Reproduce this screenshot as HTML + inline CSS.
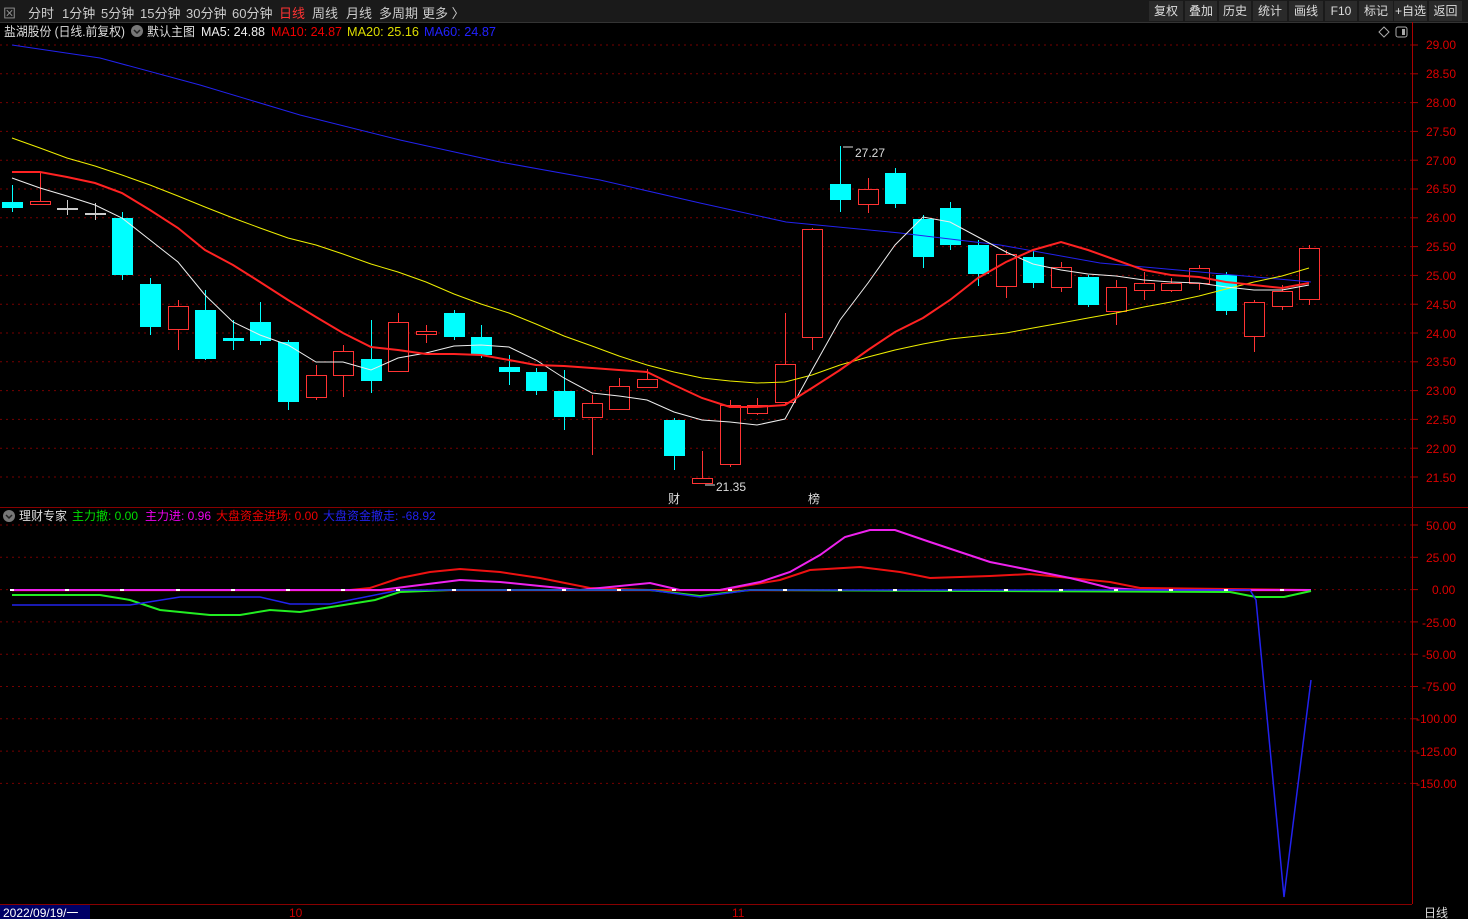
<!DOCTYPE html>
<html><head><meta charset="utf-8"><style>
body{margin:0;background:#000;width:1468px;height:919px;overflow:hidden;font-family:"Liberation Sans","Noto Sans CJK SC",sans-serif;}
#top{position:absolute;left:0;top:0;width:1468px;height:22px;background:#1a1a1a;color:#ccc;font-size:13px;}
#top span{position:absolute;top:3px}
.btn{position:absolute;top:1px;height:20px;background:#2a2a2a;color:#ddd;font-size:12px;line-height:20px;text-align:center;white-space:nowrap;overflow:hidden}
svg text{font-family:"Liberation Sans","Noto Sans CJK SC",sans-serif}
</style></head><body>
<div id="top">
<span style="left:3px;color:#999">⊠</span>
<span style="left:28px">分时</span><span style="left:62px">1分钟</span><span style="left:101px">5分钟</span><span style="left:140px">15分钟</span><span style="left:186px">30分钟</span><span style="left:232px">60分钟</span><span style="left:279px;color:#f33">日线</span><span style="left:312px">周线</span><span style="left:346px">月线</span><span style="left:379px">多周期</span><span style="left:422px">更多 〉</span>
<div class="btn" style="left:1149px;width:34px">复权</div><div class="btn" style="left:1185px;width:32px">叠加</div><div class="btn" style="left:1219px;width:32px">历史</div><div class="btn" style="left:1253px;width:34px">统计</div><div class="btn" style="left:1289px;width:34px">画线</div><div class="btn" style="left:1325px;width:32px">F10</div><div class="btn" style="left:1359px;width:34px">标记</div><div class="btn" style="left:1394px;width:33px">+自选</div><div class="btn" style="left:1429px;width:33px">返回</div>
</div>
<svg id="s" width="1468" height="919" style="position:absolute;left:0;top:0" font-size="12">
<line x1="0" y1="22.5" x2="1468" y2="22.5" stroke="#333"/>
<text x="4" y="36" fill="#ddd" font-size="12.5" textLength="121" lengthAdjust="spacingAndGlyphs">盐湖股份 (日线.前复权)</text>
<circle cx="137" cy="31" r="6" fill="#777"/><path d="M134 30l3 3 3-3" stroke="#222" fill="none" stroke-width="1.5"/>
<text x="147" y="36" fill="#ddd" font-size="12.5" textLength="48" lengthAdjust="spacingAndGlyphs">默认主图</text>
<text x="201" y="36" fill="#eee" font-size="12.5" textLength="64" lengthAdjust="spacingAndGlyphs">MA5: 24.88</text>
<text x="271" y="36" fill="#e00" font-size="12.5" textLength="71" lengthAdjust="spacingAndGlyphs">MA10: 24.87</text>
<text x="347" y="36" fill="#dd0" font-size="12.5" textLength="72" lengthAdjust="spacingAndGlyphs">MA20: 25.16</text>
<text x="424" y="36" fill="#22f" font-size="12.5" textLength="72" lengthAdjust="spacingAndGlyphs">MA60: 24.87</text>
<path d="M1384 27l5 5-5 5-5-5z" stroke="#aaa" fill="none"/>
<rect x="1396" y="27" width="11" height="10" rx="2" stroke="#aaa" fill="none"/><rect x="1402" y="29" width="3" height="6" fill="#aaa"/>
<line x1="1412.5" y1="22" x2="1412.5" y2="919" stroke="#a00"/>
<line x1="0" y1="507.5" x2="1468" y2="507.5" stroke="#800"/>
<line x1="0" y1="904.5" x2="1412" y2="904.5" stroke="#800"/>
<g id="grid"></g>
<g fill="#d00" font-size="12">
<text x="1426" y="49">29.00</text><text x="1426" y="78">28.50</text><text x="1426" y="107">28.00</text><text x="1426" y="136">27.50</text><text x="1426" y="165">27.00</text><text x="1426" y="193">26.50</text><text x="1426" y="222">26.00</text><text x="1426" y="251">25.50</text><text x="1426" y="280">25.00</text><text x="1426" y="309">24.50</text><text x="1426" y="338">24.00</text><text x="1426" y="366">23.50</text><text x="1426" y="395">23.00</text><text x="1426" y="424">22.50</text><text x="1426" y="453">22.00</text><text x="1426" y="482">21.50</text>
<text x="1426" y="530">50.00</text><text x="1426" y="562">25.00</text><text x="1432" y="594">0.00</text><text x="1422" y="627">-25.00</text><text x="1422" y="659">-50.00</text><text x="1422" y="691">-75.00</text><text x="1416" y="723">-100.00</text><text x="1416" y="756">-125.00</text><text x="1416" y="788">-150.00</text>
</g>
<g id="c"></g>
<text x="855" y="157" fill="#ddd">27.27</text><path d="M843 147h10" stroke="#ddd"/>
<text x="716" y="491" fill="#ddd">21.35</text><path d="M705 485h10" stroke="#ddd"/>
<text x="668" y="503" fill="#ddd">财</text><text x="808" y="503" fill="#ddd">榜</text>
<circle cx="9" cy="516" r="6" fill="#777"/><path d="M6 515l3 3 3-3" stroke="#222" fill="none" stroke-width="1.5"/>
<text x="19" y="520" fill="#ddd">理财专家</text>
<text x="72" y="520" fill="#0d0">主力撤: 0.00</text>
<text x="145" y="520" fill="#e0e">主力进: 0.96</text>
<text x="216" y="520" fill="#e00">大盘资金进场: 0.00</text>
<text x="323" y="520" fill="#22e">大盘资金撤走: -68.92</text>
<rect x="0" y="905" width="90" height="14" fill="#006"/>
<text x="3" y="917" fill="#fff">2022/09/19/一</text>
<text x="289" y="917" fill="#c00">10</text><text x="732" y="917" fill="#c00">11</text>
<rect x="1412" y="904" width="56" height="15" fill="#000"/><text x="1424" y="917" fill="#ddd">日线</text>
</svg>
<script>
var s='',g='';
for(var i=0;i<16;i++){var y=45+i*28.8;g+='<line x1="0" y1="'+y+'" x2="1412" y2="'+y+'" stroke="#700" stroke-dasharray="2,4"/><line x1="1412" y1="'+y+'" x2="1418" y2="'+y+'" stroke="#a00"/>';}
for(var i=0;i<9;i++){var y=525+i*32.3;g+='<line x1="0" y1="'+y+'" x2="1412" y2="'+y+'" stroke="#700" stroke-dasharray="2,4"/><line x1="1412" y1="'+y+'" x2="1418" y2="'+y+'" stroke="#a00"/>';}
document.getElementById('grid').innerHTML=g;
var C=[['c',202,208,185,212],['r',201,204,172,205],['w',208,209,200,215],['w',213,214,203,220],['c',218,275,212,280],['c',284,327,278,335],['r',306,329,300,350],['c',310,359,290,360],['c',338,341,320,350],['c',322,341,302,345],['c',342,402,340,410],['r',375,397,365,400],['r',351,375,345,397],['c',359,381,320,393],['r',322,371,313,372],['r',331,334,325,343],['c',313,337,310,340],['c',337,355,325,358],['c',367,372,355,385],['c',372,391,368,395],['c',391,417,370,430],['r',403,417,395,455],['r',386,409,378,410],['r',379,387,369,388],['c',420,456,418,470],['r',478,483,451,484],['r',405,464,400,467],['r',405,413,398,415],['r',364,402,313,404],['r',229,337,228,350],['c',184,200,146,212],['r',189,204,178,213],['c',173,204,168,208],['c',219,257,215,268],['c',208,245,202,250],['c',245,274,240,286],['r',254,286,250,298],['c',257,283,250,288],['r',267,287,262,292],['c',277,305,275,307],['r',287,311,280,325],['r',283,290,272,300],['r',283,290,278,292],['r',268,283,265,290],['c',275,311,272,315],['r',302,336,300,352],['r',291,306,285,310],['r',248,299,245,305]];
var X=[];
C.forEach(function(c,i){var x=Math.round(12+i*27.6);X.push(x);var col=c[0]=='c'?'#0ff':c[0]=='r'?'#f33':'#ccc';
s+='<line x1="'+(x+.5)+'" y1="'+c[3]+'" x2="'+(x+.5)+'" y2="'+c[4]+'" stroke="'+col+'"/>';
var h=Math.max(1,c[2]-c[1]);
if(c[0]=='c')s+='<rect x="'+(x-10)+'" y="'+c[1]+'" width="21" height="'+h+'" fill="#0ff"/>';
else s+='<rect x="'+(x-9.5)+'" y="'+(c[1]+.5)+'" width="20" height="'+h+'" fill="#000" stroke="'+col+'"/>';});
function pl(ys,col,w){var p=ys.map(function(y,i){return X[i]+','+y}).join(' ');return '<polyline points="'+p+'" fill="none" stroke="'+col+'" stroke-width="'+w+'"/>';}
function pp(pts,col,w){return '<polyline points="'+pts+'" fill="none" stroke="'+col+'" stroke-width="'+w+'"/>';}
s+=pp('12,45 100,58 200,85 300,115 400,140 500,162 600,180 700,203 786,222 900,233 1000,245 1100,263 1200,272 1311,282','#22e',1);
s+=pl([138,148,158,166,175,185,196,207,218,228,238,245,254,264,272,282,294,304,313,324,336,346,356,365,372,378,381,383,382,375,365,357,350,344,339,336,333,328,323,318,313,307,302,296,289,282,276,268],'#ee0',1);
s+=pl([178,188,196,205,218,240,262,295,322,335,345,362,362,370,358,353,346,345,347,360,378,393,396,400,412,420,422,425,419,370,320,283,245,217,222,237,252,264,270,274,276,280,282,283,287,290,290,285],'#eee',1);
s+=pl([172,172,177,183,193,210,228,250,265,282,300,317,333,347,350,354,354,355,360,365,366,368,370,372,385,398,407,407,405,388,370,350,332,318,300,278,262,250,242,250,260,270,275,277,282,285,288,283],'#f22',2);
s+='<line x1="12" y1="590.5" x2="1311" y2="590.5" stroke="#e00" stroke-width="1.5"/>';
s+=pp('12,590 350,590 370,588 400,578 430,572 460,569 500,572 540,578 590,588 650,590 720,590 780,580 810,570 860,567 900,572 930,578 990,576 1030,574 1070,578 1110,582 1140,588 1311,590','#e11',2);
s+=pp('12,590 380,590 420,585 460,580 500,582 540,586 580,590 650,583 680,590 720,590 760,582 790,572 820,555 845,537 870,530 895,530 930,542 960,552 990,562 1030,570 1070,578 1110,588 1140,590 1311,590','#e2e',2);
s+=pp('12,595 100,595 130,600 160,610 210,615 240,615 270,610 300,612 350,604 375,600 400,592 450,590 650,590 700,596 750,590 1230,592 1256,597 1284,597 1311,591','#2e2',2);
s+=pp('12,605 130,605 180,597 260,597 290,604 330,604 400,590 650,590 700,597 750,590 1250,590 1256,600 1284,897 1311,680','#22e',1.5);
for(var i=0;i<24;i++){var x=Math.round(12+i*55.2);s+='<rect x="'+(x-2)+'" y="589" width="4" height="2" fill="#fff"/>';}
document.getElementById('c').innerHTML=s;
</script>
</body></html>
